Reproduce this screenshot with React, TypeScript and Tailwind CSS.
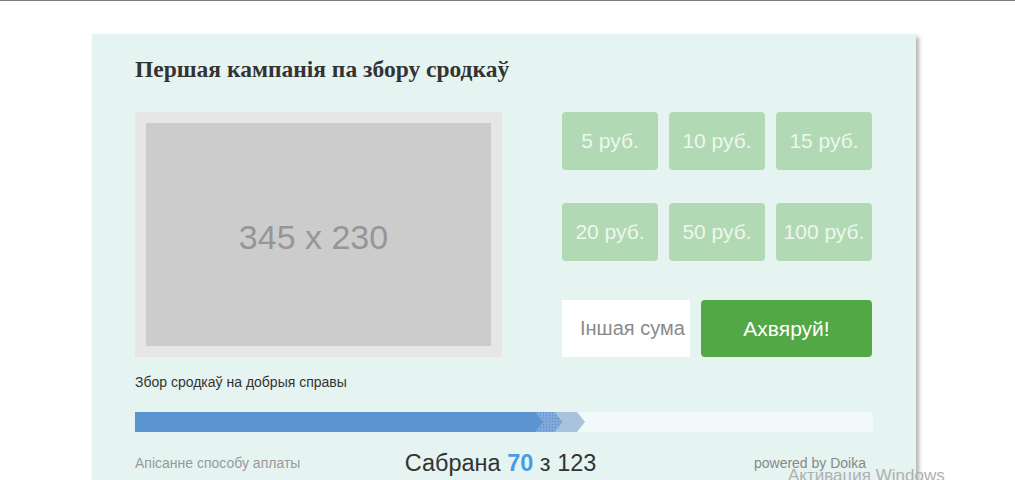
import React from "react";

const AMOUNTS = ["5 руб.", "10 руб.", "15 руб.", "20 руб.", "50 руб.", "100 руб."];

const sans = { fontFamily: '"Liberation Sans", Arial, sans-serif' };

// progress strip with arrow-shaped head
const ProgressBar: React.FC = () => (
  <div className="h-5 w-full rounded-r-sm bg-[#f1faf8]">
    <svg width="737" height="20" viewBox="0 0 737 20" className="block">
      <defs>
        <pattern id="dots" width="3" height="3" patternUnits="userSpaceOnUse">
          <rect width="3" height="3" fill="#7fa9d8" />
          <rect width="1" height="1" fill="#5a8fcf" />
        </pattern>
      </defs>
      <polygon points="420,0 442,0 450,10 442,20 420,20 428,10" fill="#a9c3dc" />
      <polygon points="398,0 420,0 428,10 420,20 398,20 406,10" fill="url(#dots)" />
      <polygon points="0,0 400,0 408,10 400,20 0,20" fill="#5a95d2" />
    </svg>
  </div>
);

export default function App() {
  return (
    <div className="relative min-h-[480px] overflow-hidden bg-white" style={sans}>
      {/* top rule */}
      <div className="h-px w-full bg-[#7a7a7a]" />

      <div className="ml-[92px] mt-[33px] w-[824px] bg-[#e5f4f1] px-[43px] pb-10 pt-[18px] shadow-[3px_3px_4px_rgba(0,0,0,0.3)]">
        <h2
          className="mb-[26px] text-[23.5px] font-bold leading-[34px] text-[#333]"
          style={{ fontFamily: '"Liberation Serif", "Times New Roman", serif' }}
        >
          Першая кампанія па збору сродкаў
        </h2>

        <div className="flex gap-[60px]">
          {/* placeholder picture */}
          <div className="flex h-[245px] w-[367px] shrink-0 bg-[#e6e6e6] p-[11px]">
            <div className="flex flex-1 items-center justify-center bg-[#cccccc] pr-[10px] pt-[6px] text-[34px] text-[#969696]">
              345 x 230
            </div>
          </div>

          {/* amounts */}
          <div className="flex w-[310px] flex-col">
            <div className="grid grid-cols-3 gap-x-[11px] gap-y-[33px]">
              {AMOUNTS.map((a) => (
                <button
                  key={a}
                  className="h-[58px] rounded-sm bg-[#b1d9b3] text-[21px] text-[#eef7ee]"
                >
                  {a}
                </button>
              ))}
            </div>
            <div className="mt-[39px] flex gap-[11px]">
              <input
                placeholder="Іншая сума"
                className="h-[57px] w-[128px] bg-white pl-[18px] text-[20px] text-[#333] outline-none placeholder:text-[#8a8a8a]"
              />
              <button className="h-[57px] flex-1 rounded-sm bg-[#52a845] text-[21px] text-white">
                Ахвяруй!
              </button>
            </div>
          </div>
        </div>

        <p className="mt-[16px] text-[14px] leading-[18px] text-[#333]">
          Збор сродкаў на добрыя справы
        </p>

        <div className="mt-[21px]">
          <ProgressBar />
        </div>

        <div className="mt-[17px] flex items-center">
          <span className="flex-1 text-[14px] text-[#999]">Апісанне способу аплаты</span>
          <span className="text-[23.5px] leading-7 text-[#333]">
            Сабрана <b className="text-[#4a9ae6]">70</b> з 123
          </span>
          <span className="flex-1 pr-[7px] text-right text-[14px] text-[#888]">powered by Doika</span>
        </div>
      </div>

      {/* windows overlays */}
      <div className="absolute bottom-0 left-[150px] h-[2px] w-[695px] bg-[#6f6f6f]" />
      <div className="absolute left-[788px] top-[463px] text-[17px] text-[#b0b0b0]">
        Активация Windows
      </div>
    </div>
  );
}
